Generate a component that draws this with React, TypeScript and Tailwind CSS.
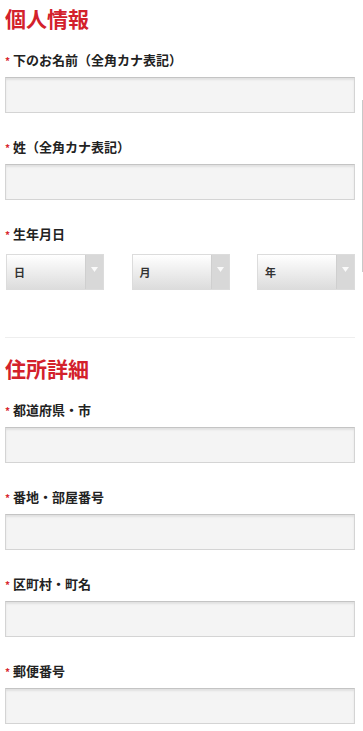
import React from 'react'

const FONT = { fontFamily: '"Noto Sans CJK JP", "Liberation Sans", sans-serif' }

function Label({ text }: { text: string }) {
  return (
    <div className="flex items-center h-4 text-[13px] leading-4 font-bold text-[#222]">
      <span className="text-[#d8262f] text-[10px] mr-[3px] relative top-[1px]">*</span>
      <span>{text}</span>
    </div>
  )
}

function TextInput() {
  return (
    <div className="mt-[9px] h-9 bg-[#f4f4f4] border border-[#d4d4d4] border-t-[#c4c4c4] shadow-[inset_0_2px_2px_rgba(0,0,0,0.08)]" />
  )
}

function Field({ text, last }: { text: string; last?: boolean }) {
  return (
    <div className={last ? '' : 'mb-[26px]'}>
      <Label text={text} />
      <TextInput />
    </div>
  )
}

function Select({ text }: { text: string }) {
  return (
    <div className="flex w-[98px] h-9 border border-[#dcdcdc] bg-gradient-to-b from-white to-[#dcdcdc]">
      <div className="flex-1 flex items-center pl-[7px] text-[11px] font-bold text-[#333]">{text}</div>
      <div className="w-[18px] flex items-center justify-center pb-[4px] bg-[#d8d8d8] border-l border-[#cfcfcf]">
        <svg width="7" height="6" viewBox="0 0 7 6">
          <path d="M0 0 H7 L3.5 5 Z" fill="#fafafa" />
        </svg>
      </div>
    </div>
  )
}

function SectionTitle({ text }: { text: string }) {
  return <h2 className="text-[21px] leading-[25px] font-bold text-[#d3212b]">{text}</h2>
}

export default function App() {
  return (
    <div className="relative w-[363px] h-[731px] overflow-hidden bg-white" style={FONT}>
      <div className="pl-[5px] pr-[8px] pt-[6px]">
        <SectionTitle text="個人情報" />
        <div className="mt-[21px]">
          <Field text="下のお名前（全角カナ表記）" />
          <Field text="姓（全角カナ表記）" />
          <Label text="生年月日" />
          <div className="mt-3 flex justify-between pl-[1px]">
            <Select text="日" />
            <Select text="月" />
            <Select text="年" />
          </div>
        </div>

        <div className="mt-[47px] h-px bg-[#eeeeee]" />

        <div className="mt-[18px]">
          <SectionTitle text="住所詳細" />
        </div>
        <div className="mt-[21px]">
          <Field text="都道府県・市" />
          <Field text="番地・部屋番号" />
          <Field text="区町村・町名" />
          <Field text="郵便番号" last />
        </div>
      </div>

      {/* scroll indicator */}
      <div className="absolute left-[362px] top-[100px] w-px h-[172px] bg-[#c8c8c8]" />
    </div>
  )
}
